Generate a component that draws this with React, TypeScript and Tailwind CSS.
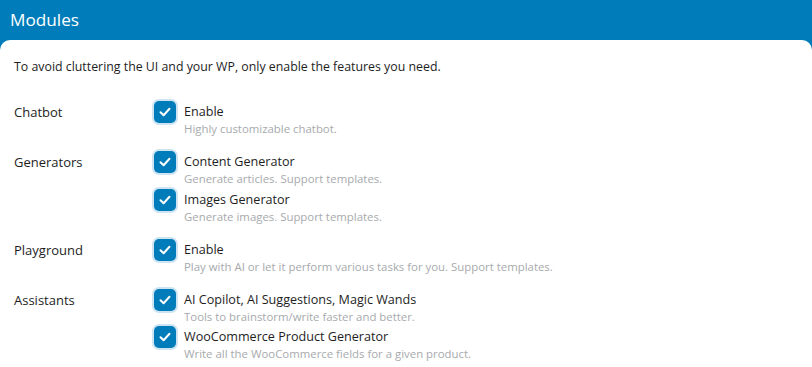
import React from "react";

type Item = { title: string; desc: string };
type Group = { label: string; items: Item[] };

const groups: Group[] = [
  { label: "Chatbot", items: [{ title: "Enable", desc: "Highly customizable chatbot." }] },
  {
    label: "Generators",
    items: [
      { title: "Content Generator", desc: "Generate articles. Support templates." },
      { title: "Images Generator", desc: "Generate images. Support templates." },
    ],
  },
  {
    label: "Playground",
    items: [{ title: "Enable", desc: "Play with AI or let it perform various tasks for you. Support templates." }],
  },
  {
    label: "Assistants",
    items: [
      { title: "AI Copilot, AI Suggestions, Magic Wands", desc: "Tools to brainstorm/write faster and better." },
      { title: "WooCommerce Product Generator", desc: "Write all the WooCommerce fields for a given product." },
    ],
  },
];

function Check() {
  return (
    <div className="w-[26px] h-[26px] shrink-0 rounded-[7px] bg-[#cfe4f2] p-[2px]">
      <div className="w-full h-full rounded-[5px] bg-[#007cba] flex items-center justify-center">
        <svg width="14" height="14" viewBox="0 0 14 14" fill="none">
          <path d="M2.5 7.3 L5.6 10.2 L11.5 3.8" stroke="white" strokeWidth="2" strokeLinecap="round" strokeLinejoin="round" />
        </svg>
      </div>
    </div>
  );
}

export default function App() {
  return (
    <div className="w-[812px] h-[367px] bg-[#007cba] flex flex-col overflow-hidden" style={{ fontFamily: '"Open Sans", "Noto Sans", sans-serif' }}>
      <div className="h-[40px] shrink-0 flex items-center pl-[10px] text-white text-[17.2px] leading-none">Modules</div>
      <div className="flex-1 bg-white rounded-t-[10px] pl-[14px] pt-[18px]">
        <div className="text-[12.35px] leading-[18px] text-[#1e1e1e]">
          To avoid cluttering the UI and your WP, only enable the features you need.
        </div>
        <div className="mt-[23px] flex flex-col gap-[12.5px]">
          {groups.map((g) => (
            <div key={g.label} className="flex">
              <div className="w-[138px] shrink-0 pt-[4px] text-[13px] leading-[18px] text-[#1e1e1e]">{g.label}</div>
              <div className="flex flex-col">
                {g.items.map((it) => (
                  <div key={it.title} className="flex h-[37.5px]">
                    <Check />
                    <div className="ml-[6px] pt-[4px]">
                      <div className="text-[12.6px] leading-[18px] text-[#1e1e1e]">{it.title}</div>
                      <div className="text-[11.4px] leading-[16px] text-[#a7aaad]">{it.desc}</div>
                    </div>
                  </div>
                ))}
              </div>
            </div>
          ))}
        </div>
      </div>
    </div>
  );
}
